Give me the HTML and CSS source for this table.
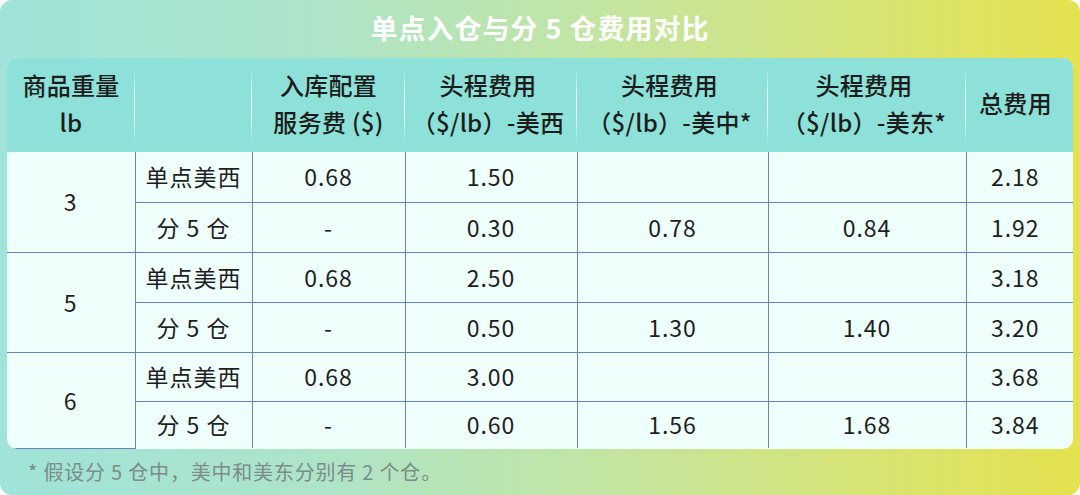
FILE: index.html
```html
<!DOCTYPE html>
<html lang="zh-CN">
<head>
<meta charset="utf-8">
<title>单点入仓与分 5 仓费用对比</title>
<link rel="stylesheet" href="styles.css">
</head>
<body>
<div class="card">
  <h1 class="title">单点入仓与分 5 仓费用对比</h1>
  <div class="table-wrap">
    <table class="cost">
      <colgroup>
        <col class="c1"><col class="c2"><col class="c3"><col class="c4"><col class="c5"><col class="c6"><col class="c7">
      </colgroup>
      <thead>
        <tr>
          <th>商品重量<br>lb</th>
          <th></th>
          <th>入库配置<br>服务费 ($)</th>
          <th class="shift">头程费用<br>（$/lb）-美西</th>
          <th class="shift">头程费用<br>（$/lb）-美中*</th>
          <th class="shift">头程费用<br>（$/lb）-美东*</th>
          <th class="shift last">总费用</th>
        </tr>
      </thead>
      <tbody>
        <tr class="r1"><td rowspan="2">3</td><td>单点美西</td><td>0.68</td><td>1.50</td><td></td><td></td><td class="total">2.18</td></tr>
        <tr class="r2"><td class="sub">分 5 仓</td><td>-</td><td>0.30</td><td>0.78</td><td>0.84</td><td class="total">1.92</td></tr>
        <tr class="r3"><td rowspan="2">5</td><td>单点美西</td><td>0.68</td><td>2.50</td><td></td><td></td><td class="total">3.18</td></tr>
        <tr class="r4"><td class="sub">分 5 仓</td><td>-</td><td>0.50</td><td>1.30</td><td>1.40</td><td class="total">3.20</td></tr>
        <tr class="r5"><td rowspan="2">6</td><td>单点美西</td><td>0.68</td><td>3.00</td><td></td><td></td><td class="total">3.68</td></tr>
        <tr class="r6"><td class="sub">分 5 仓</td><td>-</td><td>0.60</td><td>1.56</td><td>1.68</td><td class="total">3.84</td></tr>
      </tbody>
    </table>
  </div>
  <p class="note">* 假设分 5 仓中，美中和美东分别有 2 个仓。</p>
</div>
</body>
</html>
```

FILE: styles.css
```css
html, body {
  margin: 0;
  padding: 0;
  background: #ffffff;
}

.card {
  box-sizing: border-box;
  width: 1080px;
  height: 495px;
  padding: 0 7px;
  border-radius: 12px;
  background: linear-gradient(90deg, #a0e3da 0%, #aee4c8 30%, #c4e59e 58%, #d6e374 80%, #e4e24e 100%);
  font-family: "Noto Sans CJK SC", "Noto Sans", sans-serif;
  color: #1f1f1f;
  overflow: hidden;
}

.title {
  margin: 0;
  height: 58px;
  line-height: 56px;
  text-align: center;
  color: #ffffff;
  font-size: 27px;
  font-weight: 700;
  letter-spacing: 1px;
}

.table-wrap {
  border-radius: 10px;
  overflow: hidden;
  background: #effffc;
}

.cost {
  width: 1066px;
  table-layout: fixed;
  border-collapse: collapse;
  font-size: 23px;
  letter-spacing: 1px;
}

.c1 { width: 128px; }
.c2 { width: 117px; }
.c3 { width: 153px; }
.c4 { width: 172px; }
.c5 { width: 191px; }
.c6 { width: 198px; }
.c7 { width: 107px; }

.cost thead tr {
  height: 94px;
}

.cost thead th {
  padding: 0 0 5px;
  background-color: #8de1d8;
  background-image: linear-gradient(180deg, rgba(255,255,255,0) 0%, rgba(255,255,255,0.85) 40%, rgba(255,255,255,0.85) 60%, rgba(255,255,255,0) 100%);
  background-size: 1px 84%;
  background-position: right center;
  background-repeat: no-repeat;
  font-size: 24px;
  font-weight: 500;
  letter-spacing: 0.3px;
  line-height: 37px;
  text-align: center;
  vertical-align: middle;
  color: #1c1c1c;
}

.cost thead th.shift {
  padding-right: 6px;
}

.cost thead th.last {
  background-image: none;
  padding-right: 8px;
}

.cost td {
  padding: 0;
  text-align: center;
  vertical-align: middle;
  line-height: 1;
  border: 1px solid #6686b8;
  color: #1e1e1e;
}

.cost td.total {
  padding-right: 9px;
}

.cost tbody tr:first-child td { border-top: none; }
.cost tbody tr:last-child td { border-bottom: none; }
.cost td:first-child { border-left: none; }
.cost td:last-child { border-right: none; }
.cost td.sub {
  border-left: 1px solid #6686b8;
}
.cost td.total { border-left-color: #86a3c4; }

.r1, .r2, .r3, .r4 { height: 50px; }
.r5 { height: 49px; }
.r6 { height: 47px; }

.note {
  margin: 0;
  height: 47px;
  line-height: 46px;
  padding-left: 21px;
  font-size: 20px;
  letter-spacing: 0.8px;
  color: #7b8c89;
}
```
